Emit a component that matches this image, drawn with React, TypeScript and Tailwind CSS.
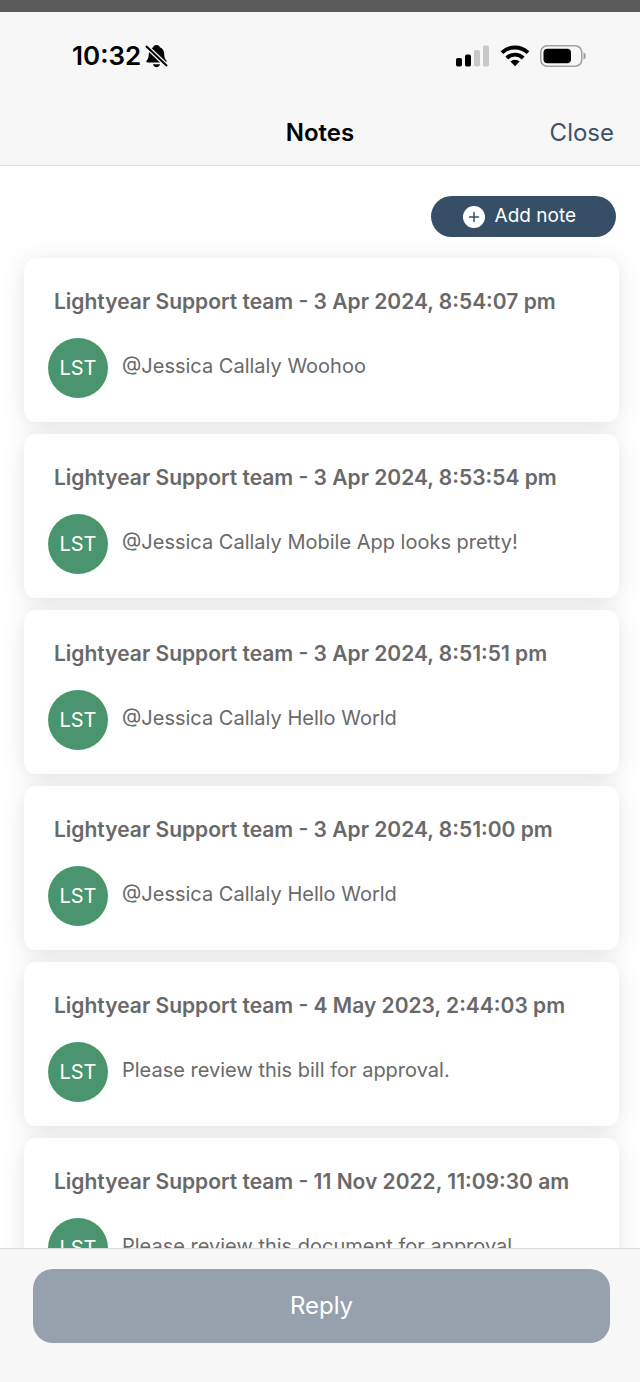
import React from 'react';

const notes = [
  { id: 1, author: 'Lightyear Support team', date: '3 Apr 2024, 8:54:07 pm', text: '@Jessica Callaly Woohoo' },
  { id: 2, author: 'Lightyear Support team', date: '3 Apr 2024, 8:53:54 pm', text: '@Jessica Callaly Mobile App looks pretty!' },
  { id: 3, author: 'Lightyear Support team', date: '3 Apr 2024, 8:51:51 pm', text: '@Jessica Callaly Hello World' },
  { id: 4, author: 'Lightyear Support team', date: '3 Apr 2024, 8:51:00 pm', text: '@Jessica Callaly Hello World' },
  { id: 5, author: 'Lightyear Support team', date: '4 May 2023, 2:44:03 pm', text: 'Please review this bill for approval.' },
  { id: 6, author: 'Lightyear Support team', date: '11 Nov 2022, 11:09:30 am', text: 'Please review this document for approval.' },
];

const BellOffIcon: React.FC = () => (
  <svg width="24" height="24" viewBox="0 0 24 24" aria-hidden="true">
    <path
      d="M11.500 1c1.700 0 2.900.8 3.300 2.200 2.900 1 4.300 3.500 4.400 6.800.1 3.500.7 4.800 2 6.300.9 1.100.4 2.200-.9 2.200H2.700c-1.300 0-1.800-1.100-.9-2.200 1.300-1.500 1.900-2.800 2-6.300.1-3.300 1.500-5.800 4.400-6.800C8.600 1.800 9.800 1 11.500 1z"
      fill="#000"
    />
    <path d="M8 20.300h7c-.3 1.700-1.700 2.900-3.500 2.900S8.300 22 8 20.300z" fill="#000" />
    <path d="M1.500 2.500 21.500 21.500" stroke="#f7f7f7" strokeWidth="4.500" />
    <path d="M1.500 2.500 21.500 21.500" stroke="#000" strokeWidth="2" strokeLinecap="round" />
  </svg>
);

const SignalIcon: React.FC = () => (
  <svg width="34" height="22" viewBox="0 0 34 22" aria-hidden="true">
    <rect x="0" y="13" width="6" height="8.500" rx="1.800" fill="#000" />
    <rect x="9" y="9.500" width="6" height="12" rx="1.800" fill="#000" />
    <rect x="18" y="5" width="6" height="16.500" rx="1.800" fill="#c8c8c8" />
    <rect x="27" y="0.500" width="6" height="21" rx="1.800" fill="#c8c8c8" />
  </svg>
);

const WifiIcon: React.FC = () => (
  <svg width="30" height="22" viewBox="0 0 30 22" fill="none" stroke="#000" strokeWidth="3.900" aria-hidden="true">
    <path d="M2 7.600a19 19 0 0 1 26 0" />
    <path d="M6.800 13a11.700 11.700 0 0 1 16.400 0" />
    <path d="M15 21.300l-4.600-4.700a6.600 6.600 0 0 1 9.200 0z" fill="#000" stroke="none" />
  </svg>
);

const BatteryIcon: React.FC = () => (
  <svg width="46" height="22" viewBox="0 0 46 22" aria-hidden="true">
    <rect x="0.750" y="0.750" width="41" height="20.500" rx="6.500" fill="none" stroke="#a0a0a0" strokeWidth="1.500" />
    <rect x="3.500" y="3.700" width="27.500" height="14.600" rx="4" fill="#000" />
    <path d="M43.500 7.500c3.200 1.200 3.200 5.800 0 7z" fill="#a0a0a0" />
  </svg>
);

const StatusBar: React.FC = () => (
  <div className="flex items-center justify-between pt-8 pr-[54px] pl-[72px]">
    <div className="flex items-center gap-1">
      <span className="text-[26px] leading-6 font-semibold text-black">10:32</span>
      <BellOffIcon />
    </div>
    <div className="flex items-center gap-[10px]">
      <SignalIcon />
      <WifiIcon />
      <BatteryIcon />
    </div>
  </div>
);

const NoteCard: React.FC<{ author: string; date: string; text: string }> = ({ author, date, text }) => (
  <li className="rounded-xl bg-white px-6 pt-7 pb-6 shadow-[0_4px_24px_rgba(0,0,0,0.11)]">
    <h2 className="pl-[6px] text-[21px] leading-8 font-semibold text-[#696969]">
      {author} - {date}
    </h2>
    <div className="mt-5 flex items-center gap-[14px]">
      <span className="flex size-15 shrink-0 items-center justify-center rounded-full bg-[#4a956f] text-xl text-white">
        LST
      </span>
      <p className="pb-1 text-xl leading-8 text-[#696969]">{text}</p>
    </div>
  </li>
);

export default function App() {
  return (
    <div className="flex h-screen flex-col bg-[#5b5b5b] pt-3 font-['Inter',sans-serif]">
      <header className="shrink-0 border-b border-[#dcdcdc] bg-[#f7f7f7]">
        <StatusBar />
        <div className="grid grid-cols-3 items-center px-[26px] pt-[49px] pb-4">
          <h1 className="col-start-2 text-center text-2xl font-semibold text-black">Notes</h1>
          <button type="button" className="justify-self-end text-2xl text-[#3d526a]">
            Close
          </button>
        </div>
      </header>

      <main className="min-h-0 flex-1 overflow-hidden bg-white pt-[30px]">
        <div className="flex justify-end pr-6">
          <button
            type="button"
            className="flex h-[41px] items-center gap-[10px] rounded-full bg-[#364f67] pr-10 pl-8 text-[19px] text-white"
          >
            <svg width="22" height="22" viewBox="0 0 22 22" aria-hidden="true">
              <circle cx="11" cy="11" r="11" fill="#fff" />
              <path d="M11 6.500v9M6.500 11h9" stroke="#364f67" strokeWidth="1.500" strokeLinecap="round" />
            </svg>
            Add note
          </button>
        </div>
        <ul className="mt-[21px] flex flex-col gap-3 pr-[21px] pl-6">
          {notes.map((note) => (
            <NoteCard key={note.id} author={note.author} date={note.date} text={note.text} />
          ))}
        </ul>
      </main>

      <footer className="shrink-0 border-t border-[#dcdcdc] bg-[#f7f7f7] pt-5 pr-[30px] pb-[39px] pl-[33px]">
        <button type="button" className="h-[74px] w-full rounded-[20px] bg-[#96a1ad] text-2xl text-white">
          Reply
        </button>
      </footer>
    </div>
  );
}
